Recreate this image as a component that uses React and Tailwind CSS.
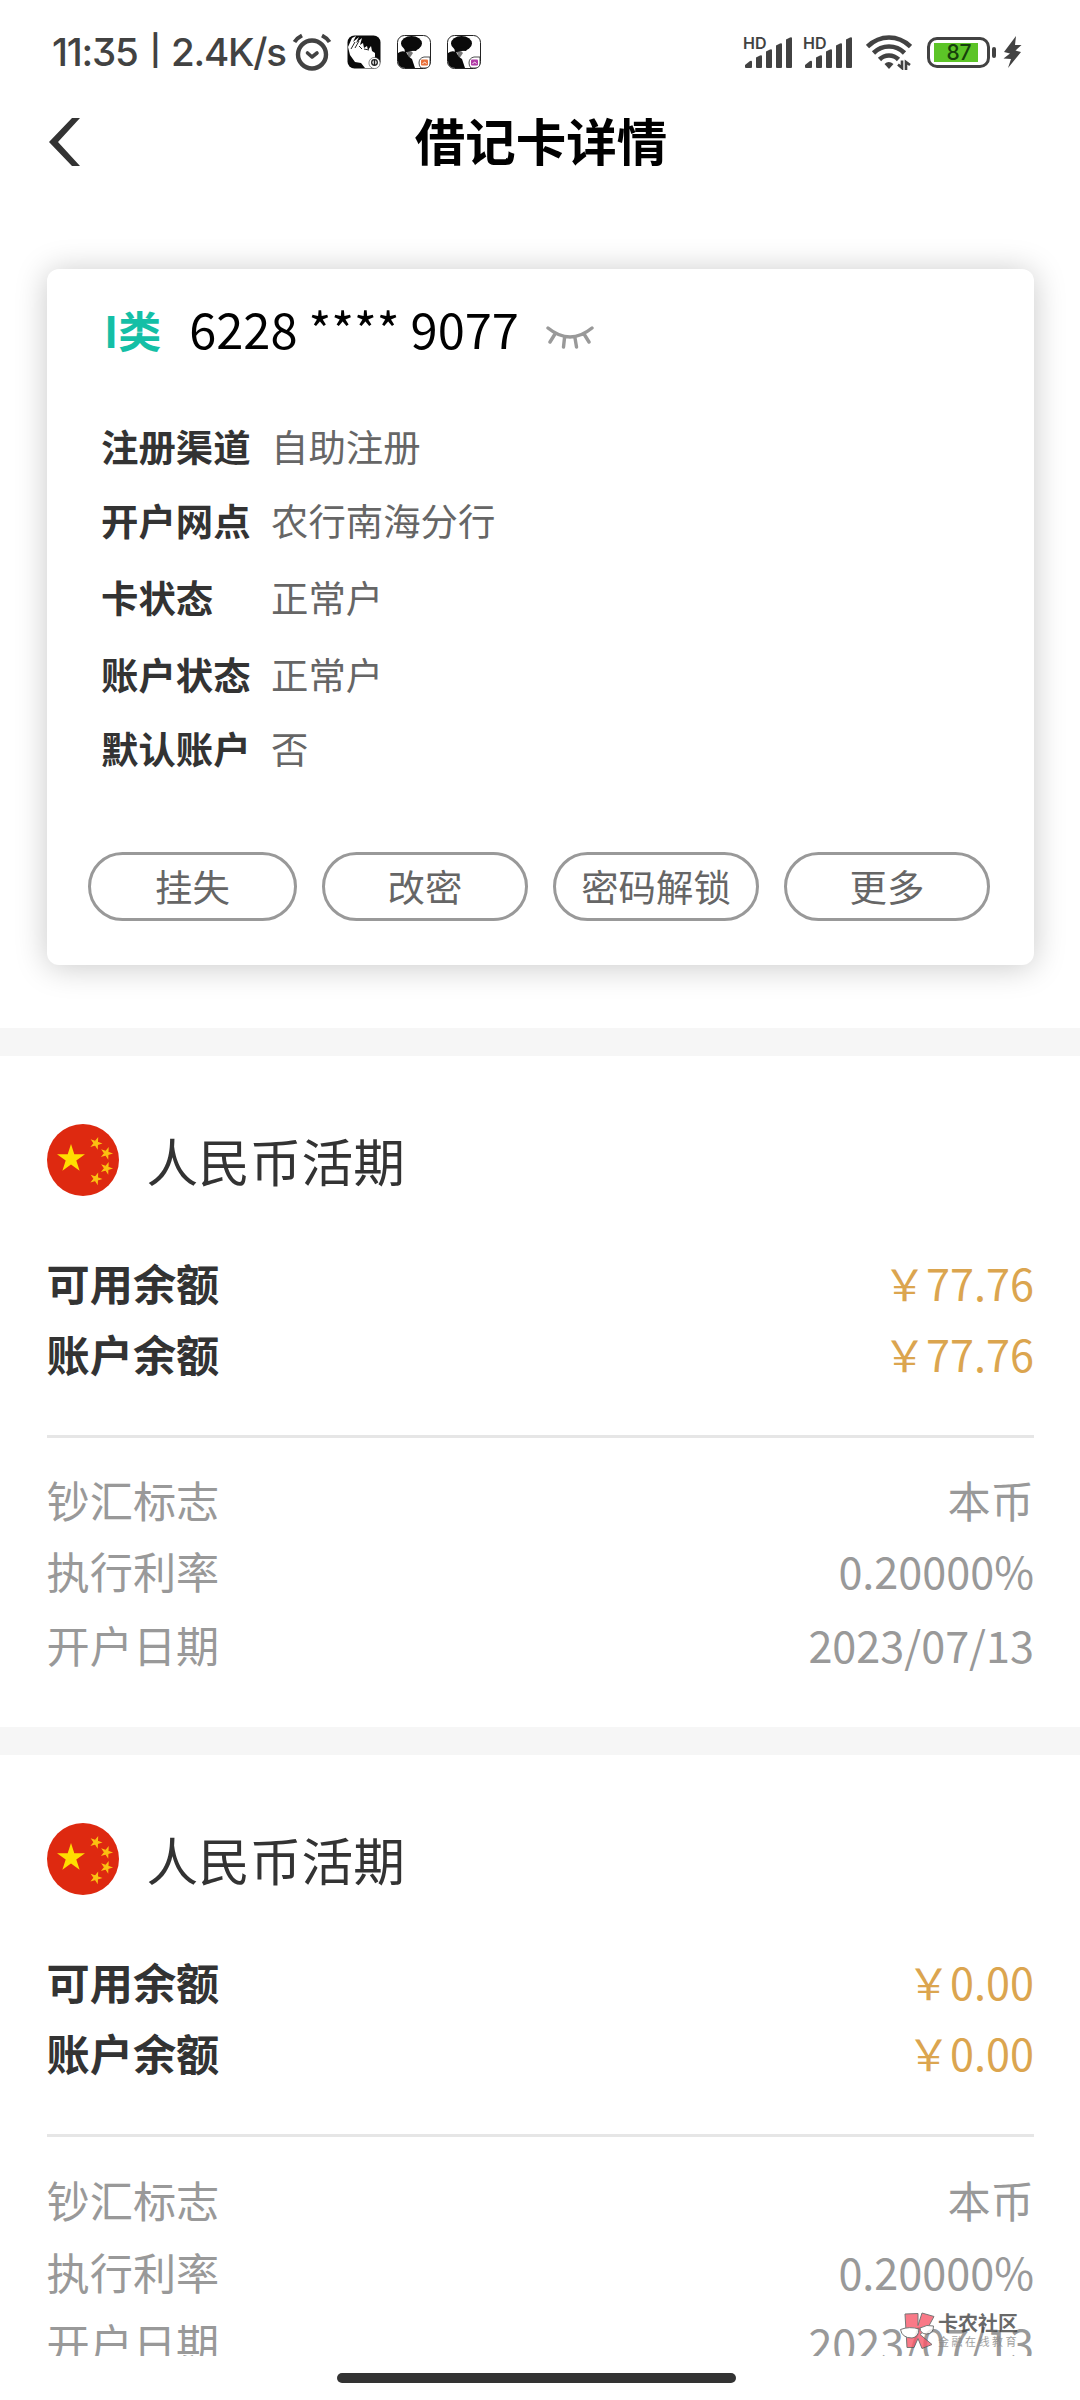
const INK = '#424242';

const cardInfo = [
  { label: '注册渠道', value: '自助注册', height: 'h-[74px]' },
  { label: '开户网点', value: '农行南海分行', height: 'h-[74px]' },
  { label: '卡状态', value: '正常户', height: 'h-[79px]' },
  { label: '账户状态', value: '正常户', height: 'h-[75px]' },
  { label: '默认账户', value: '否', height: 'h-[74px]' },
];

const actions = [
  { label: '挂失', width: 'w-[209px]' },
  { label: '改密', width: 'w-[206px]' },
  { label: '密码解锁', width: 'w-[206px]' },
  { label: '更多', width: 'w-[206px]' },
];

const accounts = [
  {
    id: 1,
    name: '人民币活期',
    available: '77.76',
    balance: '77.76',
    details: [
      { label: '钞汇标志', value: '本币', height: 'h-[67px]' },
      { label: '执行利率', value: '0.20000%', height: 'h-[75px]' },
      { label: '开户日期', value: '2023/07/13', height: 'h-[74px]' },
    ],
  },
  {
    id: 2,
    name: '人民币活期',
    available: '0.00',
    balance: '0.00',
    details: [
      { label: '钞汇标志', value: '本币', height: 'h-[70px]' },
      { label: '执行利率', value: '0.20000%', height: 'h-[74px]' },
      { label: '开户日期', value: '2023/07/13', height: 'h-[68px]' },
    ],
  },
];

const STAR = 'M0-14l3.3 10.3H14l-8.700 6.300 3.300 10.200L0 6.500l-8.600 6.300 3.300-10.200L-14-3.700h10.700z';

const smallStars = [
  { x: 49, y: 19 },
  { x: 59.5, y: 29 },
  { x: 59.5, y: 44 },
  { x: 49, y: 54.5 },
];

function AlarmIcon() {
  return (
    <svg width="40" height="38" viewBox="0 0 40 38" fill="none" stroke={INK} strokeLinecap="round">
      <circle cx="20" cy="21.5" r="14" strokeWidth="4.4" />
      <path d="M2.5 9Q5 5 10 2.5M37.5 9Q35 5 30 2.5" strokeWidth="4" strokeLinecap="butt" />
      <path d="M15.5 20l4.5 4 5-4" strokeWidth="3.6" strokeLinejoin="round" />
    </svg>
  );
}

/* Close-up portrait app icon */
function FaceAppIcon() {
  return (
    <svg width="34" height="34" viewBox="0 0 34 34">
      <rect x="0.5" y="0.5" width="33" height="33" rx="7" fill="#0a0a0a" />
      <path d="M1 12L5 3l4-2-3 6 6-5-3 6 6-5-2 7 3-2 1 5 3-2 1 4 3-4 1 5 3 2v4l-3 4-1 7h-6l-4-5-6-1-5-7z" fill="#fff" />
      <path d="M4 14l4-7M8 13l4-7M12 11l3 3M17 14l5 1" stroke="#0a0a0a" strokeWidth="0.9" />
      <circle cx="27.5" cy="28" r="5.6" fill="#fff" stroke="#444" strokeWidth="0.6" />
      <circle cx="27.5" cy="27.5" r="2.8" fill="none" stroke="#222" strokeWidth="1.3" />
      <path d="M27.5 25v5" stroke="#222" strokeWidth="1.5" />
    </svg>
  );
}

/* Side portrait app icon with a small coloured badge */
function ProfileAppIcon({ badge }) {
  return (
    <svg width="34" height="34" viewBox="0 0 34 34">
      <rect x="0.5" y="0.5" width="33" height="33" rx="7" fill="#fff" stroke="#222" />
      <ellipse cx="14.5" cy="8.5" rx="10.5" ry="7.5" fill="#0a0a0a" />
      <path d="M7 12l1 5 5 1 1-3 5 1 2-3z" fill="#0a0a0a" />
      <path d="M10 17l4-1 2 2-4 6z" fill="#777" />
      <path d="M1 18q4-3 8-1l3 5 3 2 3 9H8q-7 0-7-7z" fill="#0a0a0a" />
      <path d="M33 22h-6q-5 1-5 6 0 3 2 5h4q5 0 5-5z" fill="#fff" stroke="#222" strokeWidth="0.8" />
      <rect x="24" y="24.5" width="7" height="6" rx="1" fill={badge} />
      <path d="M25.5 29l2-2 2 1.5" stroke="#fff" strokeWidth="0.9" fill="none" />
    </svg>
  );
}

function SignalIcon() {
  return (
    <div className="relative h-[32px] w-[50px]">
      <span className="absolute top-0 left-0 font-['Inter'] text-[16px] leading-[14px] font-semibold text-[#424242]">
        HD
      </span>
      <svg className="absolute top-0 left-0" width="50" height="32" viewBox="0 0 50 32" fill={INK}>
        <path d="M3 32q-1 0-1-1v-2l5-4q2-1 2 1v5q0 1-1 1z" />
        <path d="M14 32q-1 0-1-1V21.5l4-2q2-1 2 1V31q0 1-1 1z" />
        <path d="M24 32q-1 0-1-1V15.5l4-2q2-1 2 1V31q0 1-1 1z" />
        <path d="M34 32q-1 0-1-1V9.5l4-2q2-1 2 1V31q0 1-1 1z" />
        <path d="M44 32q-1 0-1-1V3.5l4-2q2-1 2 1V31q0 1-1 1z" />
      </svg>
    </div>
  );
}

function WifiIcon() {
  return (
    <svg width="46" height="36" viewBox="0 0 46 36" fill="none" stroke={INK} strokeWidth="4.6">
      <path d="M1.5 12.5Q11 3.5 23 3.5t21.5 9" />
      <path d="M7.5 19Q14 12.5 23 12.5t15.5 6.5" />
      <path d="M13.5 25.5Q17.5 21.5 23 21.5t9.5 4" />
      <path d="M18.5 30q4-4 9 0L23 35z" fill={INK} stroke="none" />
      <path d="M32 30.5l4 3.5V26.5M44 31l-4-3V36" strokeWidth="2.6" />
    </svg>
  );
}

function BatteryIcon() {
  return (
    <div className="flex items-center">
      <div className="h-[31px] w-[63px] rounded-[10px] border-[3px] border-[#424242] p-[3px] pl-[4px]">
        <div className="flex h-full w-[44px] items-center justify-center bg-[#5cc427] pl-[6px] font-['Inter'] text-[21px] leading-none font-medium text-[#17400c]">
          87
        </div>
      </div>
      <div className="ml-[2px] h-[11px] w-[4px] rounded-[2px] bg-[#424242]" />
      <svg className="ml-[7px]" width="19" height="32" viewBox="0 0 19 32" fill={INK}>
        <path d="M13 0L1 16l6 1.5-6.5 5 7.5.5L5 32 18 16l-5.5-1.5 6-5.500h-6.500z" />
      </svg>
    </div>
  );
}

function StatusBar() {
  return (
    <div className="flex h-[102px] items-center justify-between pt-[2px] pr-[58px] pl-[52px]">
      <div className="flex items-center">
        <div className="flex w-[240px] items-center font-['Inter'] text-[38.5px] leading-none font-medium text-[#424242] [font-feature-settings:'cv09']">
          <span className="w-[98px] tracking-[-1.2px]">11:35</span>
          <span className="w-[21px] pb-[4px] text-[30px] font-semibold">|</span>
          <span className="tracking-[-1.2px]">2.4K/s</span>
        </div>
        <AlarmIcon />
        <div className="ml-[15px] flex gap-4">
          <FaceAppIcon />
          <ProfileAppIcon badge="#e8703a" />
          <ProfileAppIcon badge="#b03aa5" />
        </div>
      </div>
      <div className="flex items-center">
        <SignalIcon />
        <div className="ml-[10px]">
          <SignalIcon />
        </div>
        <div className="mr-[15px] ml-[13px]">
          <WifiIcon />
        </div>
        <BatteryIcon />
      </div>
    </div>
  );
}

function NavBar() {
  return (
    <div className="grid h-[80px] grid-cols-[200px_1fr_198px] items-center">
      <button className="pl-[48px]" aria-label="返回">
        <svg width="33" height="50" viewBox="0 0 33 50" fill="#333">
          <path d="M24 1h8L10 25l22 24h-8L1 25z" />
        </svg>
      </button>
      <h1 className="pb-[6px] text-center text-[50.5px] leading-none font-bold text-black">借记卡详情</h1>
    </div>
  );
}

function ClosedEyeIcon() {
  return (
    <svg width="48" height="24" viewBox="0 0 48 24" fill="none" stroke="#999" strokeWidth="3.4" strokeLinecap="round">
      <path d="M2 3q22 18 44 0M9 9l-5 8M18.5 13l-1 9M29 13l1.5 9M38 9l5 8" />
    </svg>
  );
}

function CardPanel() {
  return (
    <section className="mt-[87px] mr-[46px] ml-[47px] h-[696px] shrink-0 rounded-[12px] bg-white pt-[26px] shadow-[0_2px_32px_rgba(0,0,0,0.22)]">
      <div className="flex h-[66px] items-center pl-[57px]">
        <span className="pt-[2px] text-[43px] leading-none font-bold text-[#14bfa6]">I类</span>
        <span className="ml-[28px] text-[48.8px] leading-none whitespace-pre text-black">6228 **** 9077</span>
        <div className="mt-[18px] ml-[27px]">
          <ClosedEyeIcon />
        </div>
      </div>
      <dl className="mt-[49px] pl-[54px] text-[37.4px] leading-none">
        {cardInfo.map((row) => (
          <div key={row.label} className={`flex items-center ${row.height}`}>
            <dt className="w-[170px] font-bold text-[#333]">{row.label}</dt>
            <dd className="text-[#666]">{row.value}</dd>
          </div>
        ))}
      </dl>
      <div className="mt-[66px] flex justify-between pr-[44px] pl-[41px]">
        {actions.map((action) => (
          <button
            key={action.label}
            className={`flex h-[69px] items-center justify-center rounded-full border-[3px] border-[#999] text-[37.4px] leading-none text-[#666] ${action.width}`}
          >
            {action.label}
          </button>
        ))}
      </div>
    </section>
  );
}

function ChinaFlag() {
  return (
    <svg width="72" height="72" viewBox="0 0 72 72">
      <circle cx="36" cy="36" r="36" fill="#de2910" />
      <path d={STAR} transform="translate(24 34)" fill="#ffde00" />
      {smallStars.map((star) => (
        <path
          key={`${star.x}-${star.y}`}
          d={STAR}
          transform={`translate(${star.x} ${star.y}) rotate(20) scale(0.34)`}
          fill="#fbc112"
          stroke="#fbc112"
          strokeWidth="3"
        />
      ))}
    </svg>
  );
}

function Row({ label, value, className, labelClass = '', valueClass = '' }) {
  return (
    <div className={`flex items-center justify-between ${className}`}>
      <span className={labelClass}>{label}</span>
      <span className={valueClass}>{value}</span>
    </div>
  );
}

function AccountSection({ account }) {
  return (
    <section className="h-[699px] shrink-0 border-t-[28px] border-[#f6f6f6] pt-[68px] pr-[46px] pl-[46.5px] text-[43.2px] leading-none">
      <div className="flex h-[72px] items-center">
        <ChinaFlag />
        <h2 className="ml-[28px] text-[51.7px] leading-none text-[#333]">{account.name}</h2>
      </div>
      <div className="mt-[51px]">
        <Row className="h-[71px]" label="可用余额" value={`￥${account.available}`} labelClass="font-bold text-[#333]" valueClass="text-[#dba54f]" />
        <Row className="h-[71px]" label="账户余额" value={`￥${account.balance}`} labelClass="font-bold text-[#333]" valueClass="text-[#dba54f]" />
      </div>
      <div className="mt-[46px] h-[3px] bg-[#e6e6e6]" />
      <div className="mt-[28px] text-[#999]">
        {account.details.map((row) => (
          <Row key={row.label} className={row.height} label={row.label} value={row.value} />
        ))}
      </div>
    </section>
  );
}

function Watermark() {
  return (
    <div className="absolute top-[2311px] left-[900px] flex items-start opacity-80">
      <svg width="36" height="38" viewBox="0 0 36 38" stroke="#555" strokeWidth="1">
        <path d="M5 3l13-.5v12l4-12.5 12 3.5-6 11-8 7 12 10-10 4-4-10-4 9H7z" fill="#f8586a" />
        <path d="M.5 18.5q9-3.5 18.500-.5 0 8-7 9Q2 27 .5 18.500zM20 17q7-4 13.500-2 0 8-7 8-6 0-6.500-6z" fill="#fff" />
      </svg>
      <div className="ml-[2px] flex flex-col">
        <span className="text-[20px] leading-[24px] font-bold text-[#444]">卡农社区</span>
        <span className="text-[11px] leading-[12px] tracking-[2.5px] text-[#888]">金融在线教育</span>
      </div>
    </div>
  );
}

export default function App() {
  return (
    <div className="relative flex h-[2400px] w-[1080px] flex-col overflow-hidden bg-white font-['Noto_Sans_CJK_SC',sans-serif]">
      <StatusBar />
      <NavBar />
      <main className="flex h-[2174px] shrink-0 flex-col overflow-hidden">
        <CardPanel />
        <div className="mt-[63px] flex flex-col">
          {accounts.map((account) => (
            <AccountSection key={account.id} account={account} />
          ))}
        </div>
      </main>
      <div className="mt-[17px] ml-[337px] h-[10px] w-[399px] rounded-full bg-[#333]" />
      <Watermark />
    </div>
  );
}
